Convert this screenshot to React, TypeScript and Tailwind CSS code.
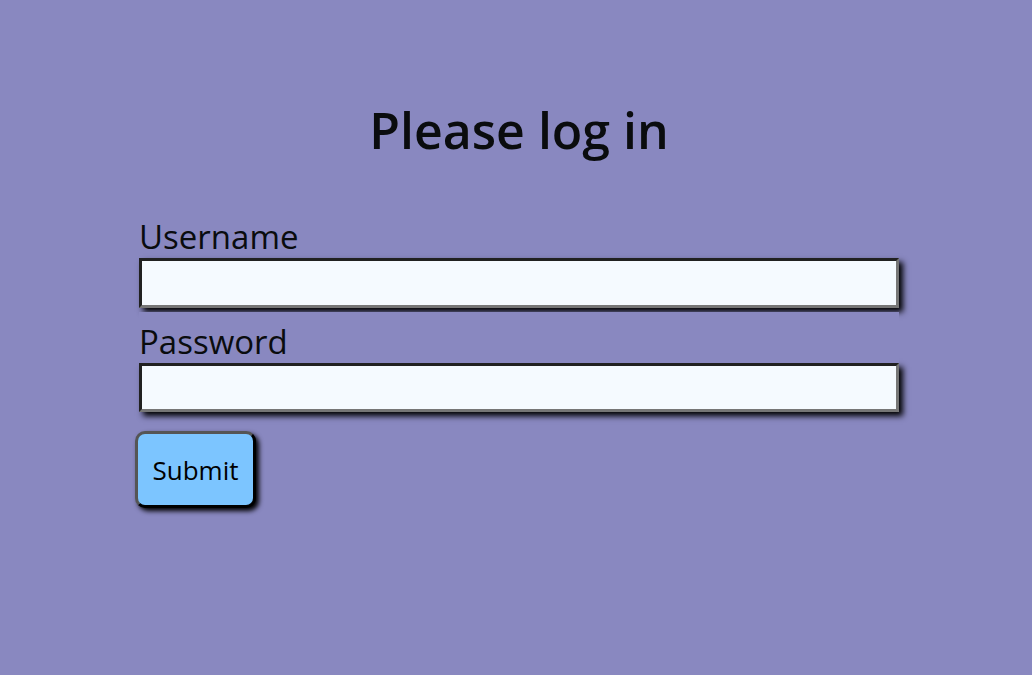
export default function App() {
  return (
    <main className="min-h-screen bg-[#8988c0] pt-[96px] pr-[133px] pl-[139px] font-['Open_Sans','Noto_Sans',sans-serif] text-[#0a0c0e]">
      <form className="flex flex-col" onSubmit={(e) => e.preventDefault()}>
        <h1 className="text-center text-[50px] leading-[68px] font-semibold">Please log in</h1>
        <label htmlFor="username" className="mt-[43px] bg-[#8988c0] pt-2 text-[33px] leading-[43px]">Username</label>
        <input id="username" type="text" className="h-[50px] w-full border-[3px] border-t-[#212121] border-r-[#767676] border-b-[#767676] border-l-[#212121] bg-[#f5faff] px-2 text-2xl shadow-[4px_4px_6px_#000]" />
        <label htmlFor="password" className="relative mt-1 bg-[#8988c0] pt-2 text-[33px] leading-[43px]">Password</label>
        <input id="password" type="password" className="h-[49px] w-full border-[3px] border-t-[#212121] border-r-[#767676] border-b-[#767676] border-l-[#212121] bg-[#f5faff] px-2 text-2xl shadow-[4px_4px_6px_#000]" />
        <button type="submit" className="mt-[19px] -ml-1 h-[77px] w-[121px] rounded-[10px] border-[3px] border-t-[#555555] border-r-black border-b-black border-l-[#555555] bg-[#7cc5ff] pt-0.5 text-[26px] text-black shadow-[3px_3px_5px_#000]">Submit</button>
      </form>
    </main>
  );
}
